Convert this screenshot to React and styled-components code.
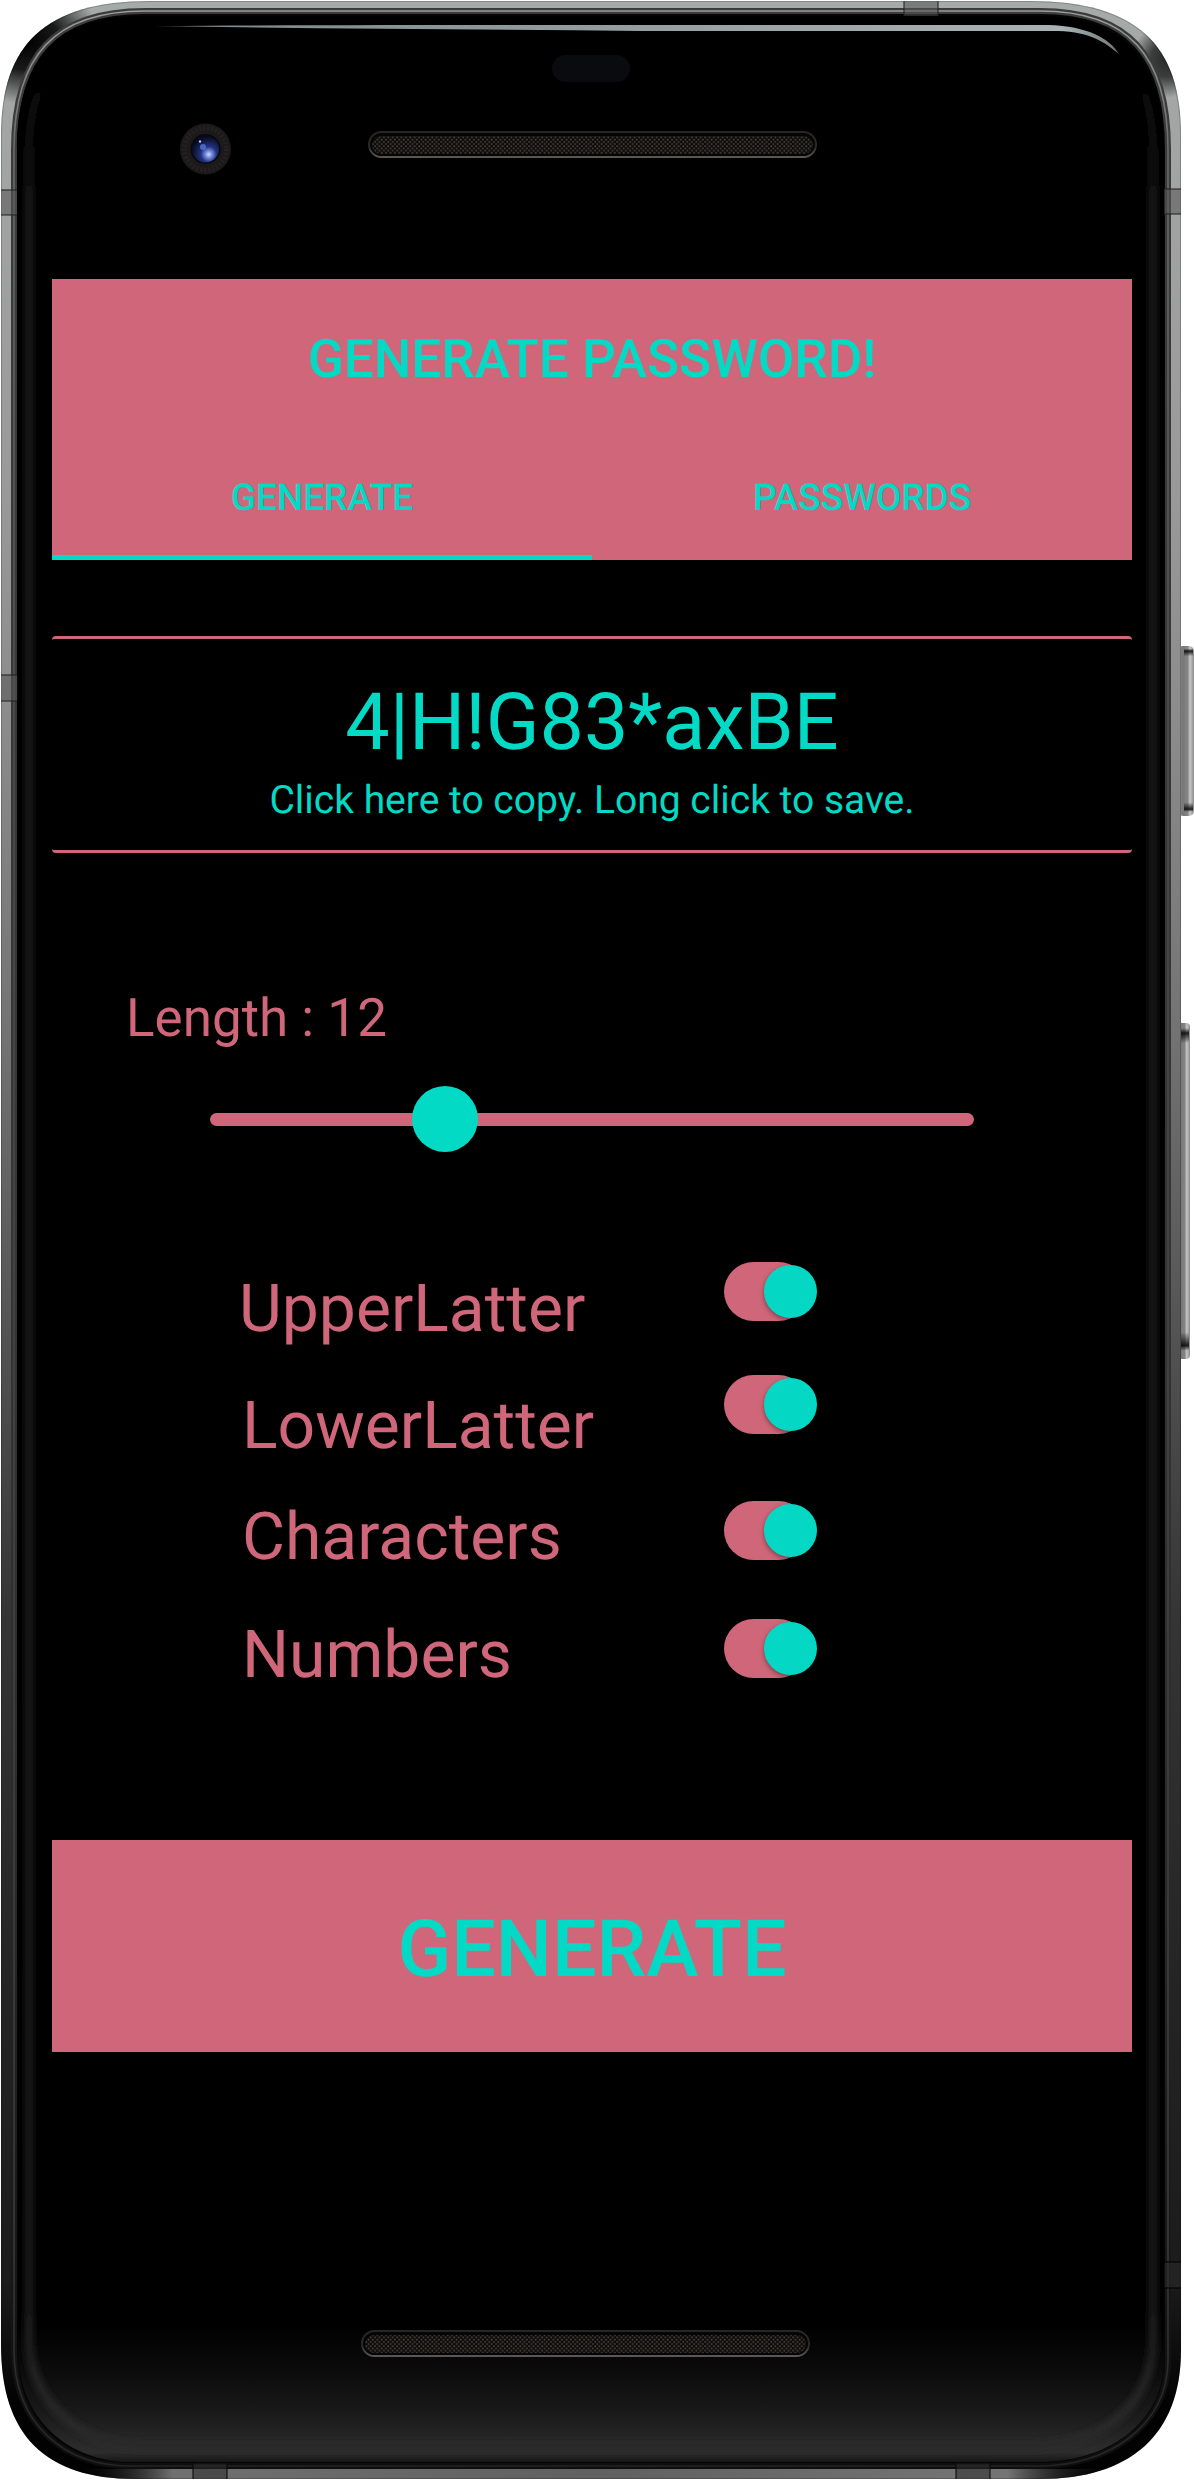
import React, { useState } from "react";
import styled, { createGlobalStyle } from "styled-components";

const PINK = "#cf6679";
const TEAL = "#03dac5";

const GlobalStyle = createGlobalStyle`
  * { box-sizing: border-box; }
  body { margin: 0; background: #fff; font-family: Roboto, "Liberation Sans", sans-serif; text-rendering: geometricPrecision; }
  button { font: inherit; text-rendering: inherit; border: 0; padding: 0; margin: 0; background: none; cursor: pointer; }
`;

const Phone = styled.div`
  position: relative;
  width: 1194px;
  height: 2480px;
  padding: 279px 62px 0 52px;
  overflow: hidden;
`;

const DeviceArt = styled.svg`
  position: absolute;
  inset: 0;
  z-index: 0;
`;

const Screen = styled.main`
  position: relative;
  z-index: 1;
  width: 1080px;
  height: 1920px;
  display: flex;
  flex-direction: column;
`;

const Header = styled.header`
  height: 281px;
  background: ${PINK};
  color: ${TEAL};
  display: flex;
  flex-direction: column;
`;

const Title = styled.h1`
  margin: 0;
  height: 155px;
  padding-top: 48px;
  font-size: 53px;
  line-height: 64px;
  font-weight: 500;
  text-align: center;
`;

const Tabs = styled.nav`
  flex: 1;
  display: flex;
`;

const Tab = styled.button`
  flex: 1;
  display: flex;
  justify-content: center;
  padding-top: 43px;
  color: ${TEAL};
  font-size: 37px;
  line-height: 43px;
  font-weight: 500;
  border-bottom: 5px solid ${(p) => (p.$active ? TEAL : "transparent")};
`;

const PasswordCard = styled.section`
  margin-top: 76px;
  height: 217px;
  border: solid ${PINK};
  border-width: 3px 0;
  border-radius: 4px;
  color: ${TEAL};
  display: flex;
  flex-direction: column;
  align-items: center;
  padding-top: 38px;
`;

const Password = styled.div`
  font-size: 79px;
  line-height: 92px;
`;

const Hint = styled.div`
  margin-top: 8px;
  font-size: 39px;
  line-height: 46px;
`;

const LengthLabel = styled.div`
  margin: 134px 0 0 74px;
  font-size: 53px;
  line-height: 62px;
  color: ${PINK};
`;

const Slider = styled.div`
  margin: 37px 158px 0;
  height: 66px;
  display: flex;
  align-items: center;
`;

const SliderTrack = styled.div`
  position: relative;
  width: 100%;
  height: 13px;
  border-radius: 7px;
  background: ${PINK};
`;

const SliderThumb = styled.div`
  position: absolute;
  top: 50%;
  width: 66px;
  height: 66px;
  border-radius: 50%;
  background: ${TEAL};
  transform: translate(-50%, -50%);
`;

const Options = styled.div`
  margin-top: 110px;
  display: flex;
  flex-direction: column;
`;

const OptionRow = styled.div`
  height: ${(p) => p.$height}px;
  padding: 0 314px 0 ${(p) => p.$indent}px;
  display: flex;
  justify-content: space-between;
  align-items: flex-start;
`;

const OptionLabel = styled.span`
  margin-top: ${(p) => p.$drop}px;
  font-size: 66px;
  line-height: 77px;
  color: ${PINK};
`;

const Switch = styled.button`
  width: 94px;
  height: 59px;
  display: flex;
  align-items: center;
`;

const SwitchTrack = styled.span`
  width: 84px;
  height: 59px;
  border-radius: 30px;
  background: ${PINK};
  display: flex;
  align-items: center;
  padding-left: ${(p) => (p.$on ? 40 : 0)}px;
`;

const SwitchThumb = styled.span`
  flex: none;
  width: 53px;
  height: 53px;
  border-radius: 50%;
  background: #04d8c4;
  box-shadow: 0 2px 5px rgba(0, 0, 0, 0.4);
`;

const GenerateButton = styled.button`
  margin-top: 103px;
  height: 212px;
  background: ${PINK};
  color: ${TEAL};
  font-size: 79px;
  line-height: 92px;
  font-weight: 500;
  text-align: center;
  padding-top: 7px;
`;

const BODY =
  "M1 135 C1 45 45 1 150 1 H1030 C1137 1 1181 45 1181 135 V2350 C1181 2435 1130 2479 1040 2479 H135 C45 2479 1 2435 1 2345 Z";
const GLASS =
  "M17 150 C17 60 57 16 145 16 H1040 C1124 16 1164 62 1164 150 V2360 C1164 2425 1105 2462 1040 2462 H130 C70 2462 18 2420 18 2350 Z";
const RIM =
  "M14 150 C14 55 55 11 145 11 H1040 C1128 11 1168 55 1168 150 V2360 C1168 2428 1105 2466 1040 2466 H130 C65 2466 14 2425 14 2350 Z";
const GLOW =
  "M29 150 C29 70 70 30 150 30 H1035 C1115 30 1153 70 1153 150 V2340 C1153 2405 1100 2446 1035 2446 H140 C80 2446 29 2400 29 2340 Z";

function Speaker({ x, y }) {
  return (
    <g>
      <rect x={x} y={y} width="449" height="27" rx="13.5" fill="#050505" />
      <rect x={x + 1} y={y + 1} width="447" height="25" rx="12.5" fill="none" stroke="url(#speakerRim)" strokeWidth="2" />
      <rect x={x + 4} y={y + 5} width="441" height="18" rx="9" fill="url(#mesh)" />
    </g>
  );
}

function PhoneFrame() {
  return (
    <DeviceArt width="1194" height="2480" viewBox="0 0 1194 2480" aria-hidden="true">
      <defs>
        <linearGradient id="metal" gradientUnits="userSpaceOnUse" x1="0" y1="0" x2="0" y2="2480">
          <stop offset="0" stopColor="#a4aba9" />
          <stop offset="0.06" stopColor="#a3a4a4" />
          <stop offset="0.2" stopColor="#999" />
          <stop offset="0.3" stopColor="#8a8a8a" />
          <stop offset="0.42" stopColor="#727272" />
          <stop offset="0.52" stopColor="#585858" />
          <stop offset="0.65" stopColor="#353535" />
          <stop offset="0.8" stopColor="#242424" />
          <stop offset="0.92" stopColor="#1b1b1b" />
          <stop offset="0.97" stopColor="#020202" />
          <stop offset="1" stopColor="#020202" />
        </linearGradient>
        <linearGradient id="rim" gradientUnits="userSpaceOnUse" x1="0" y1="0" x2="0" y2="2480">
          <stop offset="0" stopColor="#3c3c3c" />
          <stop offset="0.5" stopColor="#353535" />
          <stop offset="0.75" stopColor="#2a2a2a" />
          <stop offset="1" stopColor="#0d0d0d" />
        </linearGradient>
        <linearGradient id="rimShine" gradientUnits="userSpaceOnUse" x1="0" y1="0" x2="0" y2="2480">
          <stop offset="0" stopColor="#a0a0a0" />
          <stop offset="0.06" stopColor="#6a6a6a" />
          <stop offset="0.3" stopColor="#4c4c4c" />
          <stop offset="0.9" stopColor="#3a3a3a" />
          <stop offset="1" stopColor="#222" />
        </linearGradient>
        <linearGradient id="bottomMetal" x1="0" y1="0" x2="1" y2="0">
          <stop offset="0" stopColor="#111" stopOpacity="0" />
          <stop offset="0.09" stopColor="#707070" />
          <stop offset="0.5" stopColor="#606060" />
          <stop offset="0.9" stopColor="#757575" />
          <stop offset="1" stopColor="#111" stopOpacity="0" />
        </linearGradient>
        <linearGradient id="glassGlow" x1="0" y1="0" x2="0" y2="1">
          <stop offset="0" stopColor="#000" />
          <stop offset="0.35" stopColor="#0c0c0c" />
          <stop offset="0.65" stopColor="#1a1a1a" />
          <stop offset="0.93" stopColor="#2d2d2d" />
          <stop offset="1" stopColor="#161616" />
        </linearGradient>
        <linearGradient id="sideGlow" gradientUnits="userSpaceOnUse" x1="0" y1="60" x2="0" y2="2480">
          <stop offset="0" stopColor="#000" />
          <stop offset="0.06" stopColor="#1d1d1d" />
          <stop offset="0.93" stopColor="#1f1f1f" />
          <stop offset="0.98" stopColor="#2c2c2c" />
        </linearGradient>
        <linearGradient id="shine" gradientUnits="userSpaceOnUse" x1="155" y1="0" x2="1120" y2="0">
          <stop offset="0" stopColor="#7b8585" />
          <stop offset="0.3" stopColor="#8b9696" />
          <stop offset="0.94" stopColor="#a9b3b3" />
          <stop offset="1" stopColor="#6f7777" />
        </linearGradient>
        <linearGradient id="speakerRim" x1="0" y1="0" x2="0" y2="1">
          <stop offset="0" stopColor="#262626" />
          <stop offset="0.6" stopColor="#2a2a2a" />
          <stop offset="1" stopColor="#5b5853" />
        </linearGradient>
        <linearGradient id="key" x1="0" y1="0" x2="1" y2="0">
          <stop offset="0" stopColor="#8c8c8c" />
          <stop offset="0.3" stopColor="#777" />
          <stop offset="0.6" stopColor="#858585" />
          <stop offset="0.75" stopColor="#c8c8c8" />
          <stop offset="1" stopColor="#8a8a8a" />
        </linearGradient>
        <linearGradient id="keyEnds" x1="0" y1="0" x2="0" y2="1">
          <stop offset="0.015" stopColor="#000" stopOpacity="0" />
          <stop offset="0.03" stopColor="#000" stopOpacity="0.85" />
          <stop offset="0.06" stopColor="#000" stopOpacity="0" />
          <stop offset="0.92" stopColor="#000" stopOpacity="0" />
          <stop offset="0.96" stopColor="#000" stopOpacity="0.85" />
          <stop offset="0.975" stopColor="#000" stopOpacity="0" />
        </linearGradient>
        <radialGradient id="cornerShade">
          <stop offset="0" stopColor="#000" />
          <stop offset="0.45" stopColor="#000" stopOpacity="0.85" />
          <stop offset="1" stopColor="#000" stopOpacity="0" />
        </radialGradient>
        <radialGradient id="lens" cx="0.62" cy="0.7" r="0.65">
          <stop offset="0" stopColor="#cdd9ff" />
          <stop offset="0.2" stopColor="#7189da" />
          <stop offset="0.45" stopColor="#22327e" />
          <stop offset="1" stopColor="#080b20" />
        </radialGradient>
        <pattern id="mesh" width="4.4" height="4.4" patternUnits="userSpaceOnUse">
          <rect width="4.4" height="4.4" fill="#0b0a09" />
          <circle cx="1.1" cy="1.1" r="1" fill="#443f38" />
          <circle cx="3.3" cy="3.3" r="1" fill="#443f38" />
        </pattern>
        <filter id="soft" x="-10%" y="-10%" width="120%" height="120%">
          <feGaussianBlur stdDeviation="3.5" />
        </filter>
        <clipPath id="bodyClip"><path d={BODY} /></clipPath>
        <clipPath id="glassClip"><path d={GLASS} /></clipPath>
      </defs>

      <rect x="1178" y="646" width="16" height="170" rx="5" fill="url(#key)" />
      <rect x="1184" y="646" width="9" height="170" rx="4" fill="url(#keyEnds)" />
      <rect x="1177" y="1023" width="13" height="336" rx="4" fill="url(#key)" />
      <rect x="1181" y="1023" width="8" height="336" rx="3" fill="url(#keyEnds)" />

      <path d={BODY} fill="url(#metal)" />
      <g clipPath="url(#bodyClip)">
        <ellipse cx="26" cy="42" rx="75" ry="62" fill="url(#cornerShade)" />
        <ellipse cx="1166" cy="60" rx="34" ry="38" fill="url(#cornerShade)" opacity="0.75" />
        <rect x="80" y="2469" width="1030" height="12" fill="url(#bottomMetal)" />
        <path d={BODY} fill="none" stroke="#000" strokeOpacity="0.2" strokeWidth="2" />
        <path d={RIM} fill="#050505" stroke="url(#rim)" strokeWidth="6" />
        <path d={RIM} fill="none" stroke="url(#rimShine)" strokeWidth="1.6" />
        <g fill="#555" fillOpacity="0.55" stroke="#222" strokeOpacity="0.75" strokeWidth="1.4">
          <rect x="-1" y="190" width="19" height="25" />
          <rect x="-1" y="675" width="19" height="26" />
          <rect x="904" y="0" width="34" height="16" />
          <rect x="1164" y="189" width="20" height="25" />
          <rect x="1164" y="2262" width="20" height="26" fill="#2a2a2a" stroke="#000" />
          <rect x="193" y="2463" width="34" height="18" fill="#2b2b2b" stroke="#0a0a0a" />
          <rect x="956" y="2463" width="34" height="18" fill="#2b2b2b" stroke="#0a0a0a" />
        </g>
      </g>

      <path d={GLASS} fill="#000" />
      <g clipPath="url(#glassClip)">
        <rect x="10" y="2325" width="1165" height="137" fill="url(#glassGlow)" />
        <path d={GLOW} fill="none" stroke="url(#sideGlow)" strokeWidth="8" filter="url(#soft)" />
        <rect x="0" y="14" width="1194" height="52" fill="#000" />
      </g>
      <path
        d="M155 26 C300 25 420 25 560 25 H1048 C1088 26 1110 39 1119 54 C1106 43 1091 32 1058 31 H640 C480 29 320 29 155 26 Z"
        fill="url(#shine)"
      />

      <rect x="552" y="55" width="78" height="27" rx="13.5" fill="#0a0b0f" />
      <circle cx="205.5" cy="149" r="25.5" fill="#1c191a" />
      <circle cx="205.5" cy="149" r="21" fill="none" stroke="#242122" strokeWidth="5" strokeDasharray="2 2" />
      <circle cx="205.5" cy="149" r="15" fill="#08080d" />
      <circle cx="205.5" cy="149" r="13.5" fill="url(#lens)" />
      <circle cx="203" cy="147" r="3" fill="#5577d8" opacity="0.8" />
      <circle cx="200" cy="141.5" r="1.2" fill="#b5c2ff" />

      <Speaker x={368} y={131} />
      <Speaker x={361} y={2330} />
    </DeviceArt>
  );
}

const OPTIONS = [
  { name: "UpperLatter", height: 113, indent: 187, drop: 9 },
  { name: "LowerLatter", height: 126, indent: 190, drop: 13 },
  { name: "Characters", height: 118, indent: 190, drop: -2 },
  { name: "Numbers", height: 118, indent: 190, drop: -2 },
];

export default function App() {
  const [tab, setTab] = useState("GENERATE");
  const [enabled, setEnabled] = useState(OPTIONS.map(() => true));
  const length = 12;
  const toggle = (i) => setEnabled(enabled.map((on, n) => (n === i ? !on : on)));

  return (
    <>
      <GlobalStyle />
      <Phone>
        <PhoneFrame />
        <Screen>
          <Header>
            <Title>GENERATE PASSWORD!</Title>
            <Tabs>
              {["GENERATE", "PASSWORDS"].map((name) => (
                <Tab key={name} $active={tab === name} onClick={() => setTab(name)}>
                  {name}
                </Tab>
              ))}
            </Tabs>
          </Header>
          <PasswordCard>
            <Password>4|H!G83*axBE</Password>
            <Hint>Click here to copy. Long click to save.</Hint>
          </PasswordCard>
          <LengthLabel>Length : {length}</LengthLabel>
          <Slider>
            <SliderTrack>
              <SliderThumb style={{ left: `${((length - 4) / 26) * 100}%` }} />
            </SliderTrack>
          </Slider>
          <Options>
            {OPTIONS.map((option, i) => (
              <OptionRow key={option.name} $height={option.height} $indent={option.indent}>
                <OptionLabel $drop={option.drop}>{option.name}</OptionLabel>
                <Switch role="switch" aria-checked={enabled[i]} aria-label={option.name} onClick={() => toggle(i)}>
                  <SwitchTrack $on={enabled[i]}>
                    <SwitchThumb />
                  </SwitchTrack>
                </Switch>
              </OptionRow>
            ))}
          </Options>
          <GenerateButton>GENERATE</GenerateButton>
        </Screen>
      </Phone>
    </>
  );
}
